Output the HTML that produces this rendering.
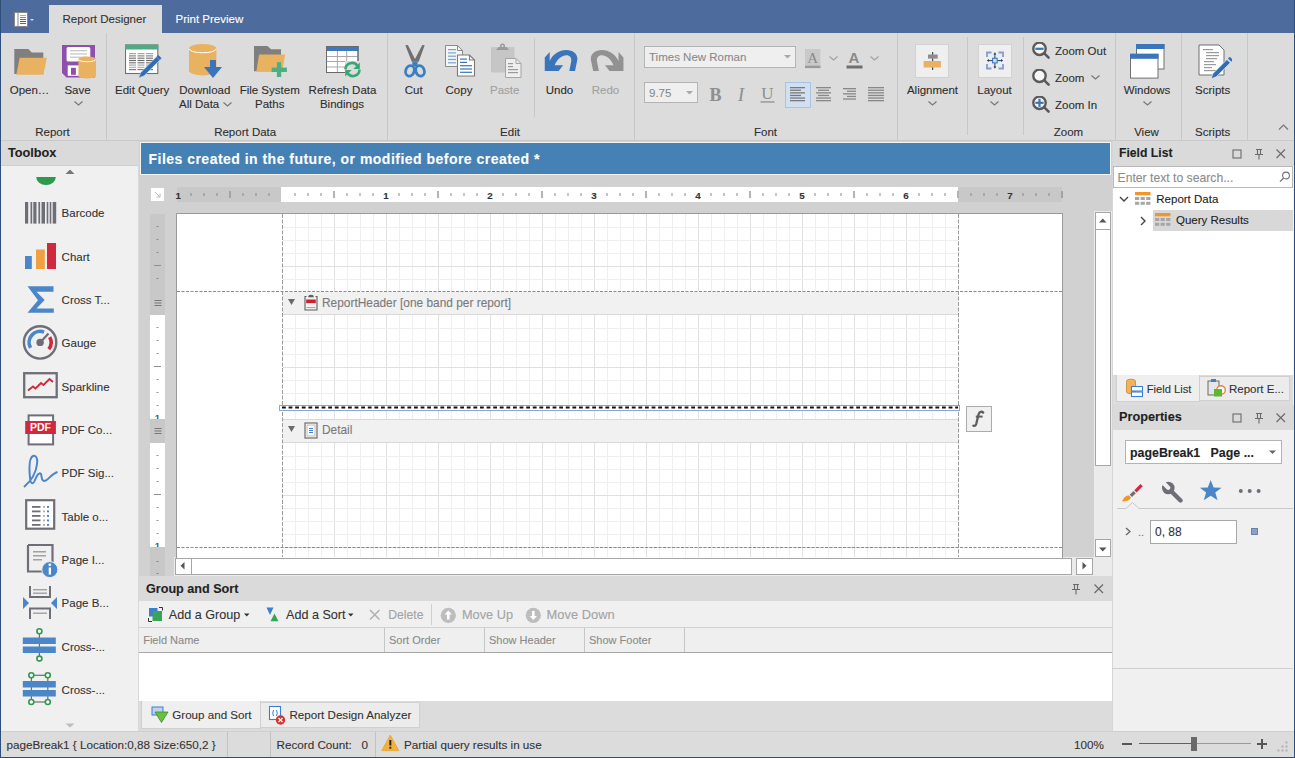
<!DOCTYPE html><html><head><meta charset="utf-8"><style>
*{margin:0;padding:0;box-sizing:border-box}
html,body{width:1295px;height:758px;overflow:hidden;background:#4d6c9d}
body{position:relative;font-family:"Liberation Sans",sans-serif}
.a{position:absolute}
.t{position:absolute;white-space:pre;line-height:16px;-webkit-text-stroke:0.1px currentColor}
</style></head><body><div class="a" style="left:0px;top:0px;width:1295px;height:758px;background:#4d6c9d"></div><div class="a" style="left:0px;top:0px;width:1295px;height:33px;background:#4d6c9d"></div><div class="a" style="left:49px;top:5px;width:113px;height:28px;background:#dcdcdc"></div><div class="t" style="left:62.5px;top:11.02px;font-size:11.5px;color:#333;">Report Designer</div><div class="t" style="left:175.5px;top:11.02px;font-size:11.5px;color:#fff;">Print Preview</div><svg class="a" style="left:14px;top:12px;" width="24" height="16" viewBox="0 0 24 16"><rect x="0.5" y="0.5" width="13" height="14" fill="#fff" stroke="#888" stroke-width="1"/><rect x="3.5" y="0.5" width="1" height="14" fill="#888"/><rect x="6" y="3" width="6" height="1" fill="#aaa"/><rect x="6" y="5" width="6" height="1" fill="#888"/><rect x="6" y="7" width="6" height="1" fill="#666"/><rect x="6" y="9" width="6" height="1" fill="#555"/><rect x="6" y="11" width="6" height="1" fill="#666"/><path d="M16 7 h4 l-2 2z" fill="#ddd"/></svg><div class="a" style="left:1px;top:33px;width:1293px;height:107px;background:#dcdcdc"></div><div class="a" style="left:1px;top:140px;width:1293px;height:1px;background:#c9c9c9"></div><div class="a" style="left:106px;top:33px;width:1px;height:107px;background:#c8c8c8"></div><div class="a" style="left:387px;top:33px;width:1px;height:107px;background:#c8c8c8"></div><div class="a" style="left:634px;top:33px;width:1px;height:107px;background:#c8c8c8"></div><div class="a" style="left:897px;top:33px;width:1px;height:107px;background:#c8c8c8"></div><div class="a" style="left:1115px;top:33px;width:1px;height:107px;background:#c8c8c8"></div><div class="a" style="left:1181px;top:33px;width:1px;height:107px;background:#c8c8c8"></div><div class="a" style="left:1247px;top:33px;width:1px;height:107px;background:#c8c8c8"></div><div class="a" style="left:534px;top:38px;width:1px;height:79px;background:#c8c8c8"></div><div class="a" style="left:967px;top:37px;width:1px;height:98px;background:#c8c8c8"></div><div class="a" style="left:1023px;top:37px;width:1px;height:98px;background:#c8c8c8"></div><svg class="a" style="left:14px;top:44px;" width="34" height="34" viewBox="0 0 34 34"><path d="M0.3 5 h14 l3.5 3.5 h11.5 v21.5 h-29z" fill="#7f7f7f"/><path d="M5.7 13.7 h27.1 l-3.4 17 h-27.1z" fill="#e8b260"/></svg><div class="t" style="left:9.7px;top:82.02px;font-size:11.5px;color:#2e2e2e;">Open…</div><svg class="a" style="left:62px;top:45px;" width="35" height="35" viewBox="0 0 35 35"><path d="M0 0 h33 v32.5 h-28.5 l-4.5 -4.6z" fill="#8e50ab"/><rect x="4.6" y="2" width="23.7" height="14.5" rx="1.5" fill="#fff"/><rect x="8" y="5" width="17" height="1.3" fill="#c8c8c8"/><rect x="8" y="8.3" width="17" height="1.3" fill="#c8c8c8"/><rect x="8" y="11.6" width="17" height="1.3" fill="#c8c8c8"/><rect x="5.7" y="20.4" width="20" height="10.4" fill="#fff"/><rect x="9" y="22.8" width="4.9" height="7" fill="#8e50ab"/><path d="M16.4 14 a8.8 2.4 0 0 1 17.6 0 v17 a8.8 2.6 0 0 1 -17.6 0z" fill="#e8b260"/><path d="M16.4 14.3 a8.8 2.4 0 0 0 17.6 0" fill="none" stroke="#fff" stroke-width="0.9"/></svg><div class="t" style="left:-72.5px;width:300px;text-align:center;top:82.02px;font-size:11.5px;color:#2e2e2e;">Save</div><svg class="a" style="left:74px;top:101px;" width="9" height="5" viewBox="0 0 9 5"><path d="M0.5 0.5 L4.5 4 L8.5 0.5" fill="none" stroke="#777" stroke-width="1.2"/></svg><div class="t" style="left:-97.5px;width:300px;text-align:center;top:124.02px;font-size:11.5px;color:#2e2e2e;">Report</div><svg class="a" style="left:125px;top:44px;" width="37" height="36" viewBox="0 0 37 36"><rect x="0.5" y="1" width="32.3" height="28.5" fill="#fff" stroke="#707070" stroke-width="1.1"/><rect x="0" y="0.5" width="33.3" height="5" fill="#52a985"/><rect x="4" y="9" width="7" height="1.2" fill="#6a6a6a" opacity="0.6"/><rect x="4" y="11.3" width="7" height="1.2" fill="#6a6a6a" opacity="0.8"/><rect x="4" y="13.6" width="7" height="1.2" fill="#6a6a6a" opacity="0.9"/><rect x="4" y="15.9" width="7" height="1.2" fill="#6a6a6a" opacity="1"/><rect x="4" y="18.2" width="7" height="1.2" fill="#6a6a6a" opacity="0.9"/><rect x="4" y="20.5" width="7" height="1.2" fill="#6a6a6a" opacity="0.6"/><rect x="4" y="22.8" width="7" height="1.2" fill="#6a6a6a" opacity="0.5"/><rect x="4" y="25" width="7" height="1.2" fill="#6a6a6a" opacity="0.9"/><rect x="12.5" y="9" width="7" height="1.2" fill="#6a6a6a" opacity="0.6"/><rect x="12.5" y="11.3" width="7" height="1.2" fill="#6a6a6a" opacity="0.8"/><rect x="12.5" y="13.6" width="7" height="1.2" fill="#6a6a6a" opacity="0.9"/><rect x="12.5" y="15.9" width="7" height="1.2" fill="#6a6a6a" opacity="1"/><rect x="12.5" y="18.2" width="7" height="1.2" fill="#6a6a6a" opacity="0.9"/><rect x="12.5" y="20.5" width="7" height="1.2" fill="#6a6a6a" opacity="0.6"/><rect x="12.5" y="22.8" width="7" height="1.2" fill="#6a6a6a" opacity="0.5"/><rect x="12.5" y="25" width="7" height="1.2" fill="#6a6a6a" opacity="0.9"/><rect x="21" y="9" width="7" height="1.2" fill="#6a6a6a" opacity="0.6"/><rect x="21" y="11.3" width="7" height="1.2" fill="#6a6a6a" opacity="0.8"/><rect x="21" y="13.6" width="7" height="1.2" fill="#6a6a6a" opacity="0.9"/><rect x="21" y="15.9" width="7" height="1.2" fill="#6a6a6a" opacity="1"/><rect x="21" y="18.2" width="7" height="1.2" fill="#6a6a6a" opacity="0.9"/><rect x="21" y="20.5" width="7" height="1.2" fill="#6a6a6a" opacity="0.6"/><rect x="21" y="22.8" width="7" height="1.2" fill="#6a6a6a" opacity="0.5"/><rect x="21" y="25" width="7" height="1.2" fill="#6a6a6a" opacity="0.9"/><path d="M13.5 34 l2.3 -5.5 l15.7 -15.7 l3.3 3.3 l-15.7 15.7z" fill="#2f6db5" stroke="#dcdcdc" stroke-width="0.6"/><path d="M31.5 12.8 l1.8 -1.8 l3.3 3.3 l-1.8 1.8z" fill="#2f6db5"/></svg><div class="t" style="left:-7.800000000000011px;width:300px;text-align:center;top:82.02px;font-size:11.5px;color:#2e2e2e;">Edit Query</div><svg class="a" style="left:188px;top:43px;" width="35" height="37" viewBox="0 0 35 37"><path d="M1 5.3 a13.7 4.3 0 0 1 27.4 0 v22.5 a13.7 4.6 0 0 1 -27.4 0z" fill="#e8b260"/><path d="M1.2 5.8 a13.5 4 0 0 0 27 0" fill="none" stroke="#fff" stroke-width="1"/><path d="M22 17 h6 v7 h6 l-9 11 l-9 -11 h6z" fill="#3a75bb"/></svg><div class="t" style="left:54.80000000000001px;width:300px;text-align:center;top:82.02px;font-size:11.5px;color:#2e2e2e;">Download</div><div class="t" style="left:179px;top:96.02px;font-size:11.5px;color:#2e2e2e;">All Data</div><svg class="a" style="left:223px;top:102px;" width="9" height="5" viewBox="0 0 9 5"><path d="M0.5 0.5 L4.5 4 L8.5 0.5" fill="none" stroke="#777" stroke-width="1.2"/></svg><svg class="a" style="left:254px;top:45px;" width="34" height="33" viewBox="0 0 34 33"><path d="M0 1 h13.5 l3.5 3.3 h10 v22 h-27z" fill="#7f7f7f"/><path d="M5.1 9.4 h26 l-2.8 17.3 h-26z" fill="#e8b260"/><rect x="22.9" y="17.2" width="4.3" height="14.8" fill="#4caf82"/><rect x="17.6" y="22.6" width="15.3" height="4.4" fill="#4caf82"/></svg><div class="t" style="left:119.69999999999999px;width:300px;text-align:center;top:82.02px;font-size:11.5px;color:#2e2e2e;">File System</div><div class="t" style="left:119.69999999999999px;width:300px;text-align:center;top:96.02px;font-size:11.5px;color:#2e2e2e;">Paths</div><svg class="a" style="left:325px;top:45px;" width="36" height="34" viewBox="0 0 36 34"><rect x="1.5" y="1.5" width="31.5" height="26" fill="#fff" stroke="#6a6a6a" stroke-width="1"/><rect x="1" y="1" width="32.5" height="5" fill="#3d78c0"/><path d="M12.4 6 v21.5 M21.7 6 v21.5 M1.5 11.5 h31.5 M1.5 16.5 h31.5 M1.5 22 h31.5" stroke="#a8a8a8" stroke-width="1"/><rect x="1.5" y="1.5" width="31.5" height="26" fill="none" stroke="#6a6a6a" stroke-width="1"/><rect x="20" y="16" width="15" height="17" fill="#dcdcdc"/><path d="M20.5 24.5 a6.5 6.5 0 0 1 12 -3.5" fill="none" stroke="#3aa676" stroke-width="2.6"/><path d="M34.5 24.5 a6.5 6.5 0 0 1 -12 3.5" fill="none" stroke="#3aa676" stroke-width="2.6"/><path d="M34.8 17.5 v6.5 h-6.5z" fill="#3aa676"/><path d="M20.2 31.5 v-6.5 h6.5z" fill="#3aa676"/></svg><div class="t" style="left:192.5px;width:300px;text-align:center;top:82.02px;font-size:11.5px;color:#2e2e2e;">Refresh Data</div><div class="t" style="left:192px;width:300px;text-align:center;top:96.02px;font-size:11.5px;color:#2e2e2e;">Bindings</div><div class="t" style="left:95.19999999999999px;width:300px;text-align:center;top:124.02px;font-size:11.5px;color:#2e2e2e;">Report Data</div><svg class="a" style="left:400px;top:42px;" width="30" height="38" viewBox="0 0 30 38"><path d="M5.3 3.2 L7.9 2.9 L15 17 L22.3 2.9 L24.7 3.2 L18.7 19.7 L11.8 19.7z" fill="#707070"/><rect x="12.3" y="19.7" width="5.3" height="4.8" fill="#3c7fc1"/><ellipse cx="9.9" cy="28.9" rx="4.2" ry="5.4" fill="none" stroke="#3c7fc1" stroke-width="2.8" transform="rotate(18 9.9 28.9)"/><ellipse cx="20.1" cy="28.9" rx="4.2" ry="5.4" fill="none" stroke="#3c7fc1" stroke-width="2.8" transform="rotate(-18 20.1 28.9)"/></svg><div class="t" style="left:263.7px;width:300px;text-align:center;top:82.02px;font-size:11.5px;color:#2e2e2e;">Cut</div><svg class="a" style="left:444px;top:44px;" width="33" height="34" viewBox="0 0 33 34"><path d="M1.5 1.5 h12 l5 5 v16 h-17z" fill="#f5f5f5" stroke="#8a8a8a" stroke-width="1"/><path d="M13.5 1.5 v5 h5" fill="none" stroke="#8a8a8a" stroke-width="1"/><rect x="4" y="5" width="8" height="1.2" fill="#5b8fc9" opacity="0.8"/><rect x="4" y="8.3" width="8" height="1.2" fill="#5b8fc9" opacity="0.8"/><rect x="4" y="11.6" width="8" height="1.2" fill="#5b8fc9" opacity="0.8"/><rect x="4" y="14.9" width="8" height="1.2" fill="#5b8fc9" opacity="0.8"/><rect x="4" y="18.2" width="8" height="1.2" fill="#5b8fc9" opacity="0.8"/><path d="M13.5 11 h12 l5 5 v16 h-17z" fill="#fff" stroke="#7a7a7a" stroke-width="1.1"/><path d="M25.5 11 v5 h5" fill="none" stroke="#7a7a7a" stroke-width="1.1"/><rect x="16" y="14.5" width="7" height="1.2" fill="#3c73b8"/><rect x="16" y="17.8" width="7" height="1.2" fill="#3c73b8"/><rect x="16" y="21.1" width="12" height="1.2" fill="#3c73b8"/><rect x="16" y="24.4" width="12" height="1.2" fill="#3c73b8"/><rect x="16" y="27.7" width="12" height="1.2" fill="#3c73b8"/></svg><div class="t" style="left:309px;width:300px;text-align:center;top:82.02px;font-size:11.5px;color:#2e2e2e;">Copy</div><svg class="a" style="left:490px;top:43px;" width="32" height="35" viewBox="0 0 32 35"><rect x="1" y="4" width="23.5" height="25.5" rx="1" fill="#c6c6c6"/><path d="M6 7 h13 l-2.5 -3 h-8z" fill="#9a9a9a"/><circle cx="12.5" cy="3" r="1.8" fill="none" stroke="#9a9a9a" stroke-width="1.5"/><path d="M15.5 15.5 h10.5 l5 5 v14 h-15.5z" fill="#eeeeee" stroke="#a5a5a5" stroke-width="1"/><path d="M26 15.5 v5 h5" fill="none" stroke="#a5a5a5" stroke-width="1"/><rect x="18" y="20" width="5" height="1.2" fill="#9a9a9a"/><rect x="18" y="23" width="5" height="1.2" fill="#9a9a9a"/><rect x="18" y="26" width="10" height="1.2" fill="#9a9a9a"/><rect x="18" y="29" width="10" height="1.2" fill="#9a9a9a"/></svg><div class="t" style="left:354.7px;width:300px;text-align:center;top:82.02px;font-size:11.5px;color:#a0a0a0;">Paste</div><svg class="a" style="left:538px;top:40px;" width="48" height="36" viewBox="0 0 48 36"><path d="M6.75 30.9 L6.75 17.4 L11.7 12.1 L11.7 21 C15 14 21 10 28.4 10 C35 10 39.8 14 39.4 19.5 L37 30.9 L31.3 30.9 L33.3 21 C33.5 17.5 31.5 15.3 28.8 15.3 C23.5 15.3 19 19.5 16.7 25.2 L25.2 25.2 L20.6 30.9 Z" fill="#3a75bb"/></svg><div class="t" style="left:409.5px;width:300px;text-align:center;top:82.02px;font-size:11.5px;color:#2a2a2a;">Undo</div><svg class="a" style="left:584px;top:40px;" width="48" height="36" viewBox="0 0 48 36"><path d="M6.75 30.9 L6.75 17.4 L11.7 12.1 L11.7 21 C15 14 21 10 28.4 10 C35 10 39.8 14 39.4 19.5 L37 30.9 L31.3 30.9 L33.3 21 C33.5 17.5 31.5 15.3 28.8 15.3 C23.5 15.3 19 19.5 16.7 25.2 L25.2 25.2 L20.6 30.9 Z" fill="#919191" transform="translate(46.2,0) scale(-1,1)"/></svg><div class="t" style="left:455.5px;width:300px;text-align:center;top:82.02px;font-size:11.5px;color:#a0a0a0;">Redo</div><div class="t" style="left:360px;width:300px;text-align:center;top:124.02px;font-size:11.5px;color:#2e2e2e;">Edit</div><div class="a" style="left:644px;top:46px;width:152px;height:22px;background:#efefef;border:1px solid #b4b4b4"></div><div class="t" style="left:649px;top:49.02px;font-size:11.5px;color:#8a8a8a;">Times New Roman</div><svg class="a" style="left:784px;top:55px;" width="8" height="4" viewBox="0 0 8 4"><path d="M0 0 h7 l-3.5 3.5z" fill="#a8a8a8"/></svg><div class="a" style="left:644px;top:82px;width:54px;height:21px;background:#efefef;border:1px solid #b4b4b4"></div><div class="t" style="left:649px;top:84.52px;font-size:11.5px;color:#8a8a8a;">9.75</div><svg class="a" style="left:686px;top:91px;" width="8" height="4" viewBox="0 0 8 4"><path d="M0 0 h7 l-3.5 3.5z" fill="#a8a8a8"/></svg><svg class="a" style="left:805px;top:49px;" width="17" height="20" viewBox="0 0 17 20"><rect x="0" y="0" width="15.5" height="16" fill="#c9c9c9"/><text x="7.75" y="14" font-family="Liberation Serif" font-size="15" fill="#8a8a8a" text-anchor="middle">A</text><rect x="0" y="16.5" width="15.5" height="2.6" fill="#9a9a9a"/></svg><svg class="a" style="left:829px;top:56px;" width="9" height="5" viewBox="0 0 9 5"><path d="M0.5 0.5 L4.5 4 L8.5 0.5" fill="none" stroke="#a0a0a0" stroke-width="1.1"/></svg><svg class="a" style="left:846px;top:49px;" width="17" height="20" viewBox="0 0 17 20"><text x="8" y="14" font-family="Liberation Sans" font-weight="bold" font-size="15" fill="#8a8a8a" text-anchor="middle">A</text><rect x="0.5" y="16.5" width="16" height="3" fill="#6f6f6f"/></svg><svg class="a" style="left:870px;top:56px;" width="9" height="5" viewBox="0 0 9 5"><path d="M0.5 0.5 L4.5 4 L8.5 0.5" fill="none" stroke="#a0a0a0" stroke-width="1.1"/></svg><div class="t" style="left:565.5px;width:300px;text-align:center;top:86.76px;font-size:18px;color:#8f8f8f;font-weight:bold;font-family:'Liberation Serif',serif">B</div><div class="t" style="left:591px;width:300px;text-align:center;top:86.76px;font-size:18px;color:#8f8f8f;font-family:'Liberation Serif',serif;font-style:italic">I</div><svg class="a" style="left:760px;top:85px;" width="16" height="20" viewBox="0 0 16 20"><text x="7.5" y="14" font-family="Liberation Serif" font-size="17" fill="#8f8f8f" text-anchor="middle">U</text><rect x="0.5" y="16.3" width="14" height="1.3" fill="#8f8f8f"/></svg><div class="a" style="left:785px;top:82px;width:26px;height:26px;background:#cfe0f3;border:1px solid #a9c3e3"></div><svg class="a" style="left:790px;top:87px;" width="17" height="17" viewBox="0 0 17 17"><rect x="0" y="0.0" width="15" height="1.3" fill="#7a7a7a"/><rect x="0" y="2.6" width="11" height="1.3" fill="#7a7a7a"/><rect x="0" y="5.2" width="15" height="1.3" fill="#7a7a7a"/><rect x="0" y="7.8" width="11" height="1.3" fill="#7a7a7a"/><rect x="0" y="10.4" width="15" height="1.3" fill="#7a7a7a"/><rect x="0" y="13.0" width="15" height="1.3" fill="#7a7a7a"/></svg><svg class="a" style="left:816px;top:87px;" width="17" height="17" viewBox="0 0 17 17"><rect x="0" y="0.0" width="15" height="1.3" fill="#888"/><rect x="2" y="2.6" width="11" height="1.3" fill="#888"/><rect x="0" y="5.2" width="15" height="1.3" fill="#888"/><rect x="2" y="7.8" width="11" height="1.3" fill="#888"/><rect x="0" y="10.4" width="15" height="1.3" fill="#888"/><rect x="0" y="13.0" width="15" height="1.3" fill="#888"/></svg><svg class="a" style="left:843px;top:88px;" width="17" height="17" viewBox="0 0 17 17"><rect x="0" y="0.0" width="13" height="1.3" fill="#888"/><rect x="4" y="2.6" width="9" height="1.3" fill="#888"/><rect x="0" y="5.2" width="13" height="1.3" fill="#888"/><rect x="4" y="7.8" width="9" height="1.3" fill="#888"/><rect x="0" y="10.4" width="13" height="1.3" fill="#888"/></svg><svg class="a" style="left:868px;top:87px;" width="17" height="17" viewBox="0 0 17 17"><rect x="0" y="0.0" width="16" height="1.3" fill="#888"/><rect x="0" y="2.6" width="16" height="1.3" fill="#888"/><rect x="0" y="5.2" width="16" height="1.3" fill="#888"/><rect x="0" y="7.8" width="16" height="1.3" fill="#888"/><rect x="0" y="10.4" width="16" height="1.3" fill="#888"/><rect x="0" y="13.0" width="16" height="1.3" fill="#888"/></svg><div class="t" style="left:615.5px;width:300px;text-align:center;top:124.02px;font-size:11.5px;color:#2e2e2e;">Font</div><div class="a" style="left:915px;top:44px;width:34px;height:34px;background:#efefef;border:1px solid #d2d2d2"></div><svg class="a" style="left:915px;top:44px;" width="34" height="34" viewBox="0 0 34 34"><rect x="17.1" y="8" width="1.1" height="18" fill="#3a3a3a"/><rect x="13" y="10.5" width="9.7" height="4.1" fill="#8d8d8d"/><rect x="8.6" y="17" width="17.3" height="6.5" fill="#e8b260"/></svg><div class="t" style="left:782.5px;width:300px;text-align:center;top:82.02px;font-size:11.5px;color:#2e2e2e;">Alignment</div><svg class="a" style="left:928px;top:101px;" width="9" height="5" viewBox="0 0 9 5"><path d="M0.5 0.5 L4.5 4 L8.5 0.5" fill="none" stroke="#777" stroke-width="1.2"/></svg><div class="a" style="left:978px;top:44px;width:34px;height:34px;background:#efefef;border:1px solid #d2d2d2"></div><svg class="a" style="left:978px;top:44px;" width="34" height="34" viewBox="0 0 34 34"><rect x="9" y="8.5" width="16" height="16" fill="#e8eef8"/><path d="M9 13 V8.5 H13.5 M20.5 8.5 H25 V13 M25 20 V24.5 H20.5 M13.5 24.5 H9 V20" fill="none" stroke="#8a9bc8" stroke-width="1.8"/><rect x="14.6" y="14.3" width="4.6" height="4.6" fill="#bfe0f8" stroke="#3c7fc1" stroke-width="1.1"/><path d="M16.9 14 V10 M16.9 19.2 V23 M14.3 16.6 H10.5 M19.5 16.6 H23.5" stroke="#2c3e5c" stroke-width="1"/><path d="M15.4 10.5 L16.9 8.3 L18.4 10.5z M15.4 22.5 L16.9 24.7 L18.4 22.5z M11 15.1 L8.8 16.6 L11 18.1z M23 15.1 L25.2 16.6 L23 18.1z" fill="#2c3e5c"/></svg><div class="t" style="left:844.5px;width:300px;text-align:center;top:82.02px;font-size:11.5px;color:#2e2e2e;">Layout</div><svg class="a" style="left:990px;top:101px;" width="9" height="5" viewBox="0 0 9 5"><path d="M0.5 0.5 L4.5 4 L8.5 0.5" fill="none" stroke="#777" stroke-width="1.2"/></svg><svg class="a" style="left:1032px;top:42px;" width="20" height="19" viewBox="0 0 20 19"><circle cx="7.5" cy="6.8" r="6.2" fill="#f6f6f6" stroke="#5a5a5a" stroke-width="2.4"/><path d="M12.3 11.4 L16.6 15.7" stroke="#5a5a5a" stroke-width="2.6" stroke-linecap="round"/><rect x="3.4" y="5.7" width="8.2" height="2.2" fill="#3a75bb"/></svg><div class="t" style="left:1055px;top:42.52px;font-size:11.5px;color:#2e2e2e;">Zoom Out</div><svg class="a" style="left:1032px;top:69px;" width="20" height="19" viewBox="0 0 20 19"><circle cx="7.5" cy="6.8" r="6.2" fill="#f6f6f6" stroke="#5a5a5a" stroke-width="2.4"/><path d="M12.3 11.4 L16.6 15.7" stroke="#5a5a5a" stroke-width="2.6" stroke-linecap="round"/></svg><div class="t" style="left:1055px;top:69.52px;font-size:11.5px;color:#2e2e2e;">Zoom</div><svg class="a" style="left:1091px;top:75px;" width="9" height="5" viewBox="0 0 9 5"><path d="M0.5 0.5 L4.5 4 L8.5 0.5" fill="none" stroke="#777" stroke-width="1.2"/></svg><svg class="a" style="left:1032px;top:96px;" width="20" height="19" viewBox="0 0 20 19"><circle cx="7.5" cy="6.8" r="6.2" fill="#f6f6f6" stroke="#5a5a5a" stroke-width="2.4"/><path d="M12.3 11.4 L16.6 15.7" stroke="#5a5a5a" stroke-width="2.6" stroke-linecap="round"/><rect x="3.4" y="5.7" width="8.2" height="2.2" fill="#3a75bb"/><rect x="6.4" y="2.7" width="2.2" height="8.2" fill="#3a75bb"/></svg><div class="t" style="left:1055px;top:96.52px;font-size:11.5px;color:#2e2e2e;">Zoom In</div><div class="t" style="left:918.5px;width:300px;text-align:center;top:124.02px;font-size:11.5px;color:#2e2e2e;">Zoom</div><svg class="a" style="left:1129px;top:43px;" width="37" height="38" viewBox="0 0 37 38"><rect x="7.5" y="1.5" width="27.5" height="24.5" fill="#fff" stroke="#707070" stroke-width="1"/><rect x="7" y="1" width="28.5" height="5" fill="#3a75bb"/><rect x="1.5" y="11.3" width="27.5" height="23.8" fill="#fff" stroke="#707070" stroke-width="1"/><rect x="1" y="10.8" width="28.5" height="5" fill="#3a75bb"/></svg><div class="t" style="left:997px;width:300px;text-align:center;top:82.02px;font-size:11.5px;color:#2e2e2e;">Windows</div><svg class="a" style="left:1143px;top:101px;" width="9" height="5" viewBox="0 0 9 5"><path d="M0.5 0.5 L4.5 4 L8.5 0.5" fill="none" stroke="#777" stroke-width="1.2"/></svg><div class="t" style="left:996.5px;width:300px;text-align:center;top:124.02px;font-size:11.5px;color:#2e2e2e;">View</div><svg class="a" style="left:1198px;top:43px;" width="34" height="37" viewBox="0 0 34 37"><path d="M1 2 h20 l5 5 v25 h-25z" fill="#fff" stroke="#707070" stroke-width="1"/><rect x="5" y="6" width="10" height="1.2" fill="#9a9a9a"/><rect x="8" y="9" width="13" height="1.2" fill="#9a9a9a"/><rect x="8" y="12" width="13" height="1.2" fill="#9a9a9a"/><rect x="8" y="15" width="11" height="1.2" fill="#9a9a9a"/><rect x="6" y="18" width="10" height="1.2" fill="#9a9a9a"/><rect x="6" y="21" width="12" height="1.2" fill="#9a9a9a"/><rect x="6" y="24" width="8" height="1.2" fill="#9a9a9a"/><rect x="6" y="27" width="12" height="1.2" fill="#9a9a9a"/><path d="M13 36 l2 -5.5 l14 -14 l3.3 3.3 l-14 14z" fill="#2f6db5" stroke="#fff" stroke-width="0.6"/><path d="M30 15.5 l1.8 -1.8 l3.3 3.3 l-1.8 1.8z" fill="#2f6db5"/></svg><div class="t" style="left:1062.7px;width:300px;text-align:center;top:82.02px;font-size:11.5px;color:#2e2e2e;">Scripts</div><div class="t" style="left:1062.7px;width:300px;text-align:center;top:124.02px;font-size:11.5px;color:#2e2e2e;">Scripts</div><svg class="a" style="left:1278px;top:123px;" width="12" height="8" viewBox="0 0 12 8"><path d="M1 6.5 L5.5 2 L10 6.5" fill="none" stroke="#777" stroke-width="1.2"/></svg><div class="a" style="left:138px;top:141px;width:974px;height:436px;background:#d1d1d1"></div><div class="a" style="left:1px;top:141px;width:137px;height:590px;background:#f0f0f0"></div><div class="a" style="left:1px;top:141px;width:137px;height:24px;background:#dadada"></div><div class="a" style="left:1px;top:165px;width:137px;height:1px;background:#cfcfcf"></div><div class="t" style="left:8px;top:145.10px;font-size:12.7px;color:#222;font-weight:bold;">Toolbox</div><svg class="a" style="left:64px;top:168px;" width="12" height="8" viewBox="0 0 12 8"><path d="M1.5 6 L6 1.5 L10.5 6z" fill="#777"/></svg><svg class="a" style="left:35px;top:175px;" width="22" height="11" viewBox="0 0 22 11"><path d="M1.2 2 h19.6 a9.8 8 0 0 1 -19.6 0z" fill="#2e9a4c"/></svg><div class="t" style="left:61.6px;top:205.22px;font-size:11.5px;color:#333;">Barcode</div><div class="t" style="left:61.6px;top:248.57px;font-size:11.5px;color:#333;">Chart</div><div class="t" style="left:61.6px;top:291.92px;font-size:11.5px;color:#333;">Cross T...</div><div class="t" style="left:61.6px;top:335.27px;font-size:11.5px;color:#333;">Gauge</div><div class="t" style="left:61.6px;top:378.62px;font-size:11.5px;color:#333;">Sparkline</div><div class="t" style="left:61.6px;top:421.97px;font-size:11.5px;color:#333;">PDF Co...</div><div class="t" style="left:61.6px;top:465.32px;font-size:11.5px;color:#333;">PDF Sig...</div><div class="t" style="left:61.6px;top:508.67px;font-size:11.5px;color:#333;">Table o...</div><div class="t" style="left:61.6px;top:552.02px;font-size:11.5px;color:#333;">Page I...</div><div class="t" style="left:61.6px;top:595.37px;font-size:11.5px;color:#333;">Page B...</div><div class="t" style="left:61.6px;top:638.72px;font-size:11.5px;color:#333;">Cross-...</div><div class="t" style="left:61.6px;top:682.07px;font-size:11.5px;color:#333;">Cross-...</div><svg class="a" style="left:25px;top:202px;" width="32" height="22" viewBox="0 0 32 22"><rect x="0" y="0" width="3.2" height="21.6" fill="#6e6e78"/><rect x="5.5" y="0" width="1.7" height="21.6" fill="#6e6e78"/><rect x="8.3" y="0" width="3.2" height="21.6" fill="#6e6e78"/><rect x="13.4" y="0" width="1.7" height="21.6" fill="#6e6e78"/><rect x="16.5" y="0" width="3.5" height="21.6" fill="#6e6e78"/><rect x="21.7" y="0" width="1.6" height="21.6" fill="#6e6e78"/><rect x="24.7" y="0" width="1.6" height="21.6" fill="#6e6e78"/><rect x="27.7" y="0" width="3.5" height="21.6" fill="#6e6e78"/></svg><svg class="a" style="left:25px;top:243px;" width="32" height="27" viewBox="0 0 32 27"><rect x="0" y="13" width="6.8" height="13" fill="#4a86c8"/><rect x="11" y="6.5" width="8.8" height="19.5" fill="#f0a040"/><rect x="22" y="0" width="9" height="26" fill="#d0283c"/></svg><svg class="a" style="left:27px;top:286px;" width="28" height="28" viewBox="0 0 28 28"><path d="M0.5 0.3 h26 v5.5 h-17 l8.2 8.3 l-8.2 8.4 h17.3 v4.2 h-26.3 l10.5 -12.4z" fill="#4a86c8"/></svg><svg class="a" style="left:22px;top:324px;" width="37" height="37" viewBox="0 0 37 37"><circle cx="18.1" cy="18.4" r="16.2" fill="none" stroke="#6e6e78" stroke-width="2.4"/><path d="M8.57 23.9 A11 11 0 0 1 22.04 8.13" fill="none" stroke="#4a86c8" stroke-width="3.6"/><path d="M27.72 13.07 A11 11 0 0 1 26.81 25.11" fill="none" stroke="#d0283c" stroke-width="3.6"/><circle cx="18.1" cy="18.4" r="3.7" fill="#6e6e78"/><path d="M18.1 18.4 L26.5 9.5" stroke="#6e6e78" stroke-width="2.2"/></svg><svg class="a" style="left:23px;top:372px;" width="36" height="27" viewBox="0 0 36 27"><rect x="1.2" y="1.2" width="32.5" height="24" fill="none" stroke="#6e6e78" stroke-width="2.3"/><path d="M5 18.5 L10 14.5 L12.5 16.5 L18 11 L20.5 13 L26.5 7 L30 10" fill="none" stroke="#d0283c" stroke-width="1.8"/></svg><svg class="a" style="left:25px;top:414px;" width="32" height="32" viewBox="0 0 32 32"><rect x="3.6" y="1.4" width="24.5" height="29" fill="#fff" stroke="#6e6e78" stroke-width="2"/><rect x="0.2" y="7" width="30.7" height="13" fill="#d0283c"/><text x="15.5" y="17.3" font-family="Liberation Sans" font-weight="bold" font-size="10.5" fill="#fff" text-anchor="middle">PDF</text></svg><svg class="a" style="left:23px;top:454px;" width="36" height="35" viewBox="0 0 36 35"><path d="M1 33 C8 27 13 20 14 10 C15 3 12 1 10 2 C6 4 6 14 7 24 C7.5 30 10 31 12 26 C14 21 16 18 18 20 C19 22 18 27 21 27 C25 27 28 20 34.5 18" fill="none" stroke="#4a86c8" stroke-width="2"/></svg><svg class="a" style="left:25px;top:499px;" width="31" height="31" viewBox="0 0 31 31"><rect x="1.2" y="1.2" width="28" height="28.5" fill="#fff" stroke="#6e6e78" stroke-width="2.2"/><rect x="7" y="7" width="8.5" height="1.8" fill="#6e6e78"/><rect x="18" y="7" width="2" height="1.8" fill="#b0b0b0"/><rect x="22" y="7" width="2" height="1.8" fill="#3a7fd0"/><rect x="7" y="11.5" width="8.5" height="1.8" fill="#6e6e78"/><rect x="18" y="11.5" width="2" height="1.8" fill="#b0b0b0"/><rect x="22" y="11.5" width="2" height="1.8" fill="#3a7fd0"/><rect x="7" y="16" width="8.5" height="1.8" fill="#6e6e78"/><rect x="18" y="16" width="2" height="1.8" fill="#b0b0b0"/><rect x="22" y="16" width="2" height="1.8" fill="#3a7fd0"/><rect x="7" y="20.5" width="8.5" height="1.8" fill="#6e6e78"/><rect x="18" y="20.5" width="2" height="1.8" fill="#b0b0b0"/><rect x="22" y="20.5" width="2" height="1.8" fill="#3a7fd0"/><rect x="7" y="25" width="8.5" height="1.8" fill="#6e6e78"/><rect x="18" y="25" width="2" height="1.8" fill="#b0b0b0"/><rect x="22" y="25" width="2" height="1.8" fill="#3a7fd0"/></svg><svg class="a" style="left:26px;top:543px;" width="34" height="36" viewBox="0 0 34 36"><path d="M2 2 h24.5 v19 M2 2 v26.5 h15" fill="none" stroke="#6e6e78" stroke-width="2.2"/><rect x="7" y="8" width="13" height="1.5" fill="#a0a0a8"/><rect x="7" y="12" width="13" height="1.5" fill="#a0a0a8"/><rect x="7" y="16" width="9" height="1.5" fill="#a0a0a8"/><circle cx="23.8" cy="26.6" r="8" fill="#4a86c8" stroke="#f0f0f0" stroke-width="1"/><rect x="22.7" y="24.5" width="2.3" height="7" fill="#fff"/><circle cx="23.8" cy="21.8" r="1.4" fill="#fff"/></svg><svg class="a" style="left:22px;top:585px;" width="36" height="35" viewBox="0 0 36 35"><path d="M8 1 v11 h20 v-11" fill="none" stroke="#6e6e78" stroke-width="2"/><rect x="11" y="4" width="14" height="1.4" fill="#a0a0a8"/><rect x="11" y="7.5" width="14" height="1.4" fill="#a0a0a8"/><path d="M8 34 v-10.5 h20 v10.5" fill="none" stroke="#6e6e78" stroke-width="2"/><rect x="11" y="27.5" width="14" height="1.4" fill="#a0a0a8"/><path d="M1 12 L7 18 L1 24z M35 12 L29 18 L35 24z" fill="#4a86c8"/></svg><svg class="a" style="left:22px;top:627px;" width="35" height="36" viewBox="0 0 35 36"><rect x="16.8" y="4" width="1.2" height="28" fill="#6e6e78"/><rect x="0.8" y="10.5" width="33" height="6.5" fill="#4a86c8"/><rect x="0.8" y="19.5" width="33" height="6.5" fill="#4a86c8"/><circle cx="17.4" cy="4.3" r="2.5" fill="#fff" stroke="#2e9a4c" stroke-width="1.6"/><circle cx="17.4" cy="31.6" r="2.5" fill="#fff" stroke="#2e9a4c" stroke-width="1.6"/></svg><svg class="a" style="left:22px;top:671px;" width="35" height="36" viewBox="0 0 35 36"><rect x="8.8" y="4" width="1.2" height="27" fill="#6e6e78"/><rect x="25.2" y="4" width="1.2" height="27" fill="#6e6e78"/><rect x="9" y="3.7" width="16.5" height="1.2" fill="#6e6e78"/><rect x="9" y="30.4" width="16.5" height="1.2" fill="#6e6e78"/><rect x="0.8" y="10" width="33" height="6.5" fill="#4a86c8"/><rect x="0.8" y="19" width="33" height="6.5" fill="#4a86c8"/><circle cx="9.3" cy="4.3" r="2.5" fill="#fff" stroke="#2e9a4c" stroke-width="1.6"/><circle cx="25.8" cy="4.3" r="2.5" fill="#fff" stroke="#2e9a4c" stroke-width="1.6"/><circle cx="9.3" cy="31" r="2.5" fill="#fff" stroke="#2e9a4c" stroke-width="1.6"/><circle cx="25.8" cy="31" r="2.5" fill="#fff" stroke="#2e9a4c" stroke-width="1.6"/></svg><svg class="a" style="left:64px;top:722px;" width="12" height="7" viewBox="0 0 12 7"><path d="M1.5 1.5 L6 5.5 L10.5 1.5z" fill="#bdbdbd"/></svg><div class="a" style="left:138px;top:141px;width:1px;height:590px;background:#d9d9d9"></div><div class="a" style="left:140px;top:142px;width:971px;height:33px;background:#f4f4f4"></div><div class="a" style="left:141px;top:143px;width:969px;height:31px;background:#4581b4"></div><div class="t" style="left:148.5px;top:151.15px;font-size:14px;color:#fff;font-weight:bold;letter-spacing:0.48px;">Files created in the future, or modified before created *</div><div class="a" style="left:1094px;top:211px;width:18px;height:346px;background:#ebebeb"></div><div class="a" style="left:174px;top:557px;width:938px;height:19px;background:#ebebeb"></div><div class="a" style="left:151px;top:188px;width:13px;height:13px;background:#fff"></div><svg class="a" style="left:151px;top:188px;" width="13" height="13" viewBox="0 0 13 13"><path d="M4 4 L9 9 M9 5.5 V9 H5.5" fill="none" stroke="#b8b8b8" stroke-width="1"/></svg><div class="a" style="left:177px;top:187px;width:104px;height:15px;background:#c8c8c8"></div><div class="a" style="left:281px;top:187px;width:677px;height:15px;background:#fff"></div><div class="a" style="left:958px;top:187px;width:104px;height:15px;background:#c8c8c8"></div><svg class="a" style="left:177px;top:187px;" width="886" height="15" viewBox="0 0 886 15"><rect x="13" y="6" width="2" height="3" fill="#a8a8a8"/><rect x="26" y="6" width="2" height="3" fill="#a8a8a8"/><rect x="39" y="6" width="2" height="3" fill="#a8a8a8"/><rect x="52" y="4" width="2" height="7" fill="#a2a2a2"/><rect x="65" y="6" width="2" height="3" fill="#a8a8a8"/><rect x="78" y="6" width="2" height="3" fill="#a8a8a8"/><rect x="91" y="6" width="2" height="3" fill="#a8a8a8"/><rect x="117" y="6" width="2" height="3" fill="#c4c4c4"/><rect x="130" y="6" width="2" height="3" fill="#c4c4c4"/><rect x="143" y="6" width="2" height="3" fill="#c4c4c4"/><rect x="156" y="4" width="2" height="7" fill="#b4b4b4"/><rect x="169" y="6" width="2" height="3" fill="#c4c4c4"/><rect x="182" y="6" width="2" height="3" fill="#c4c4c4"/><rect x="195" y="6" width="2" height="3" fill="#c4c4c4"/><rect x="221" y="6" width="2" height="3" fill="#c4c4c4"/><rect x="234" y="6" width="2" height="3" fill="#c4c4c4"/><rect x="247" y="6" width="2" height="3" fill="#c4c4c4"/><rect x="260" y="4" width="2" height="7" fill="#b4b4b4"/><rect x="273" y="6" width="2" height="3" fill="#c4c4c4"/><rect x="286" y="6" width="2" height="3" fill="#c4c4c4"/><rect x="299" y="6" width="2" height="3" fill="#c4c4c4"/><rect x="325" y="6" width="2" height="3" fill="#c4c4c4"/><rect x="338" y="6" width="2" height="3" fill="#c4c4c4"/><rect x="351" y="6" width="2" height="3" fill="#c4c4c4"/><rect x="364" y="4" width="2" height="7" fill="#b4b4b4"/><rect x="377" y="6" width="2" height="3" fill="#c4c4c4"/><rect x="390" y="6" width="2" height="3" fill="#c4c4c4"/><rect x="403" y="6" width="2" height="3" fill="#c4c4c4"/><rect x="429" y="6" width="2" height="3" fill="#c4c4c4"/><rect x="442" y="6" width="2" height="3" fill="#c4c4c4"/><rect x="455" y="6" width="2" height="3" fill="#c4c4c4"/><rect x="468" y="4" width="2" height="7" fill="#b4b4b4"/><rect x="481" y="6" width="2" height="3" fill="#c4c4c4"/><rect x="494" y="6" width="2" height="3" fill="#c4c4c4"/><rect x="507" y="6" width="2" height="3" fill="#c4c4c4"/><rect x="533" y="6" width="2" height="3" fill="#c4c4c4"/><rect x="546" y="6" width="2" height="3" fill="#c4c4c4"/><rect x="559" y="6" width="2" height="3" fill="#c4c4c4"/><rect x="572" y="4" width="2" height="7" fill="#b4b4b4"/><rect x="585" y="6" width="2" height="3" fill="#c4c4c4"/><rect x="598" y="6" width="2" height="3" fill="#c4c4c4"/><rect x="611" y="6" width="2" height="3" fill="#c4c4c4"/><rect x="637" y="6" width="2" height="3" fill="#c4c4c4"/><rect x="650" y="6" width="2" height="3" fill="#c4c4c4"/><rect x="663" y="6" width="2" height="3" fill="#c4c4c4"/><rect x="676" y="4" width="2" height="7" fill="#b4b4b4"/><rect x="689" y="6" width="2" height="3" fill="#c4c4c4"/><rect x="702" y="6" width="2" height="3" fill="#c4c4c4"/><rect x="715" y="6" width="2" height="3" fill="#c4c4c4"/><rect x="741" y="6" width="2" height="3" fill="#c4c4c4"/><rect x="754" y="6" width="2" height="3" fill="#c4c4c4"/><rect x="767" y="6" width="2" height="3" fill="#c4c4c4"/><rect x="780" y="4" width="2" height="7" fill="#b4b4b4"/><rect x="793" y="6" width="2" height="3" fill="#a8a8a8"/><rect x="806" y="6" width="2" height="3" fill="#a8a8a8"/><rect x="819" y="6" width="2" height="3" fill="#a8a8a8"/><rect x="845" y="6" width="2" height="3" fill="#a8a8a8"/><rect x="858" y="6" width="2" height="3" fill="#a8a8a8"/><rect x="871" y="6" width="2" height="3" fill="#a8a8a8"/><rect x="884" y="4" width="2" height="7" fill="#a2a2a2"/></svg><div class="t" style="left:175.5px;top:187.60px;font-size:9.8px;color:#333;font-weight:bold;">1</div><div class="t" style="left:236px;width:300px;text-align:center;top:187.60px;font-size:9.8px;color:#333;font-weight:bold;">1</div><div class="t" style="left:340px;width:300px;text-align:center;top:187.60px;font-size:9.8px;color:#333;font-weight:bold;">2</div><div class="t" style="left:444px;width:300px;text-align:center;top:187.60px;font-size:9.8px;color:#333;font-weight:bold;">3</div><div class="t" style="left:548px;width:300px;text-align:center;top:187.60px;font-size:9.8px;color:#333;font-weight:bold;">4</div><div class="t" style="left:652px;width:300px;text-align:center;top:187.60px;font-size:9.8px;color:#333;font-weight:bold;">5</div><div class="t" style="left:756px;width:300px;text-align:center;top:187.60px;font-size:9.8px;color:#333;font-weight:bold;">6</div><div class="t" style="left:860px;width:300px;text-align:center;top:187.60px;font-size:9.8px;color:#333;font-weight:bold;">7</div><div class="a" style="left:150px;top:214px;width:15px;height:101px;background:#c8c8c8"></div><div class="a" style="left:150px;top:315px;width:15px;height:104px;background:#fff"></div><div class="a" style="left:150px;top:419px;width:15px;height:24px;background:#c8c8c8"></div><div class="a" style="left:150px;top:443px;width:15px;height:104px;background:#fff"></div><div class="a" style="left:150px;top:547px;width:15px;height:29px;background:#c8c8c8"></div><svg class="a" style="left:150px;top:214px;" width="15" height="362" viewBox="0 0 15 362"><rect x="6.5" y="12" width="2" height="1" fill="#8f8f8f"/><rect x="6.5" y="25" width="2" height="1" fill="#8f8f8f"/><rect x="6.5" y="38" width="2" height="1" fill="#8f8f8f"/><rect x="4" y="51" width="7" height="1" fill="#8f8f8f"/><rect x="6.5" y="64" width="2" height="1" fill="#8f8f8f"/><rect x="6.5" y="113" width="2" height="1" fill="#8f8f8f"/><rect x="6.5" y="126" width="2" height="1" fill="#8f8f8f"/><rect x="6.5" y="139" width="2" height="1" fill="#8f8f8f"/><rect x="4" y="152" width="7" height="1" fill="#8f8f8f"/><rect x="6.5" y="165" width="2" height="1" fill="#8f8f8f"/><rect x="6.5" y="178" width="2" height="1" fill="#8f8f8f"/><rect x="6.5" y="191" width="2" height="1" fill="#8f8f8f"/><rect x="6.5" y="241" width="2" height="1" fill="#8f8f8f"/><rect x="6.5" y="254" width="2" height="1" fill="#8f8f8f"/><rect x="6.5" y="267" width="2" height="1" fill="#8f8f8f"/><rect x="4" y="280" width="7" height="1" fill="#8f8f8f"/><rect x="6.5" y="293" width="2" height="1" fill="#8f8f8f"/><rect x="6.5" y="306" width="2" height="1" fill="#8f8f8f"/><rect x="6.5" y="319" width="2" height="1" fill="#8f8f8f"/><rect x="6.5" y="347" width="2" height="1" fill="#8a8a8a"/><rect x="6.5" y="359" width="2" height="1" fill="#8a8a8a"/><rect x="4.5" y="86.0" width="7" height="1" fill="#777"/><rect x="4.5" y="88.5" width="7" height="1" fill="#777"/><rect x="4.5" y="91.0" width="7" height="1" fill="#777"/><rect x="4.5" y="214.0" width="7" height="1" fill="#777"/><rect x="4.5" y="216.5" width="7" height="1" fill="#777"/><rect x="4.5" y="219.0" width="7" height="1" fill="#777"/></svg><svg class="a" style="left:152px;top:411px;" width="11" height="8" viewBox="0 0 11 8"><text x="5.5" y="9.8" font-family="Liberation Sans" font-weight="bold" font-size="9.5" fill="#555" text-anchor="middle">1</text></svg><svg class="a" style="left:152px;top:539px;" width="11" height="8" viewBox="0 0 11 8"><text x="5.5" y="9.8" font-family="Liberation Sans" font-weight="bold" font-size="9.5" fill="#555" text-anchor="middle">1</text></svg><div class="a" style="left:176px;top:213px;width:887px;height:345px;background:#fff;border-left:1px solid #9a9a9a;border-top:1px solid #9a9a9a;border-right:1px solid #9a9a9a"></div><svg class="a" style="left:282px;top:214px;" width="676" height="343" viewBox="0 0 676 343"><rect x="13" y="0" width="1" height="77" fill="#efefef"/><rect x="26" y="0" width="1" height="77" fill="#efefef"/><rect x="39" y="0" width="1" height="77" fill="#efefef"/><rect x="52" y="0" width="1" height="77" fill="#e0e0e0"/><rect x="65" y="0" width="1" height="77" fill="#efefef"/><rect x="78" y="0" width="1" height="77" fill="#efefef"/><rect x="91" y="0" width="1" height="77" fill="#efefef"/><rect x="104" y="0" width="1" height="77" fill="#e0e0e0"/><rect x="117" y="0" width="1" height="77" fill="#efefef"/><rect x="130" y="0" width="1" height="77" fill="#efefef"/><rect x="143" y="0" width="1" height="77" fill="#efefef"/><rect x="156" y="0" width="1" height="77" fill="#e0e0e0"/><rect x="169" y="0" width="1" height="77" fill="#efefef"/><rect x="182" y="0" width="1" height="77" fill="#efefef"/><rect x="195" y="0" width="1" height="77" fill="#efefef"/><rect x="208" y="0" width="1" height="77" fill="#e0e0e0"/><rect x="221" y="0" width="1" height="77" fill="#efefef"/><rect x="234" y="0" width="1" height="77" fill="#efefef"/><rect x="247" y="0" width="1" height="77" fill="#efefef"/><rect x="260" y="0" width="1" height="77" fill="#e0e0e0"/><rect x="273" y="0" width="1" height="77" fill="#efefef"/><rect x="286" y="0" width="1" height="77" fill="#efefef"/><rect x="299" y="0" width="1" height="77" fill="#efefef"/><rect x="312" y="0" width="1" height="77" fill="#e0e0e0"/><rect x="325" y="0" width="1" height="77" fill="#efefef"/><rect x="338" y="0" width="1" height="77" fill="#efefef"/><rect x="351" y="0" width="1" height="77" fill="#efefef"/><rect x="364" y="0" width="1" height="77" fill="#e0e0e0"/><rect x="377" y="0" width="1" height="77" fill="#efefef"/><rect x="390" y="0" width="1" height="77" fill="#efefef"/><rect x="403" y="0" width="1" height="77" fill="#efefef"/><rect x="416" y="0" width="1" height="77" fill="#e0e0e0"/><rect x="429" y="0" width="1" height="77" fill="#efefef"/><rect x="442" y="0" width="1" height="77" fill="#efefef"/><rect x="455" y="0" width="1" height="77" fill="#efefef"/><rect x="468" y="0" width="1" height="77" fill="#e0e0e0"/><rect x="481" y="0" width="1" height="77" fill="#efefef"/><rect x="494" y="0" width="1" height="77" fill="#efefef"/><rect x="507" y="0" width="1" height="77" fill="#efefef"/><rect x="520" y="0" width="1" height="77" fill="#e0e0e0"/><rect x="533" y="0" width="1" height="77" fill="#efefef"/><rect x="546" y="0" width="1" height="77" fill="#efefef"/><rect x="559" y="0" width="1" height="77" fill="#efefef"/><rect x="572" y="0" width="1" height="77" fill="#e0e0e0"/><rect x="585" y="0" width="1" height="77" fill="#efefef"/><rect x="598" y="0" width="1" height="77" fill="#efefef"/><rect x="611" y="0" width="1" height="77" fill="#efefef"/><rect x="624" y="0" width="1" height="77" fill="#e0e0e0"/><rect x="637" y="0" width="1" height="77" fill="#efefef"/><rect x="650" y="0" width="1" height="77" fill="#efefef"/><rect x="663" y="0" width="1" height="77" fill="#efefef"/><rect x="1" y="13" width="675" height="1" fill="#efefef"/><rect x="1" y="26" width="675" height="1" fill="#efefef"/><rect x="1" y="39" width="675" height="1" fill="#efefef"/><rect x="1" y="52" width="675" height="1" fill="#e0e0e0"/><rect x="1" y="65" width="675" height="1" fill="#efefef"/><rect x="13" y="101" width="1" height="104" fill="#efefef"/><rect x="26" y="101" width="1" height="104" fill="#efefef"/><rect x="39" y="101" width="1" height="104" fill="#efefef"/><rect x="52" y="101" width="1" height="104" fill="#e0e0e0"/><rect x="65" y="101" width="1" height="104" fill="#efefef"/><rect x="78" y="101" width="1" height="104" fill="#efefef"/><rect x="91" y="101" width="1" height="104" fill="#efefef"/><rect x="104" y="101" width="1" height="104" fill="#e0e0e0"/><rect x="117" y="101" width="1" height="104" fill="#efefef"/><rect x="130" y="101" width="1" height="104" fill="#efefef"/><rect x="143" y="101" width="1" height="104" fill="#efefef"/><rect x="156" y="101" width="1" height="104" fill="#e0e0e0"/><rect x="169" y="101" width="1" height="104" fill="#efefef"/><rect x="182" y="101" width="1" height="104" fill="#efefef"/><rect x="195" y="101" width="1" height="104" fill="#efefef"/><rect x="208" y="101" width="1" height="104" fill="#e0e0e0"/><rect x="221" y="101" width="1" height="104" fill="#efefef"/><rect x="234" y="101" width="1" height="104" fill="#efefef"/><rect x="247" y="101" width="1" height="104" fill="#efefef"/><rect x="260" y="101" width="1" height="104" fill="#e0e0e0"/><rect x="273" y="101" width="1" height="104" fill="#efefef"/><rect x="286" y="101" width="1" height="104" fill="#efefef"/><rect x="299" y="101" width="1" height="104" fill="#efefef"/><rect x="312" y="101" width="1" height="104" fill="#e0e0e0"/><rect x="325" y="101" width="1" height="104" fill="#efefef"/><rect x="338" y="101" width="1" height="104" fill="#efefef"/><rect x="351" y="101" width="1" height="104" fill="#efefef"/><rect x="364" y="101" width="1" height="104" fill="#e0e0e0"/><rect x="377" y="101" width="1" height="104" fill="#efefef"/><rect x="390" y="101" width="1" height="104" fill="#efefef"/><rect x="403" y="101" width="1" height="104" fill="#efefef"/><rect x="416" y="101" width="1" height="104" fill="#e0e0e0"/><rect x="429" y="101" width="1" height="104" fill="#efefef"/><rect x="442" y="101" width="1" height="104" fill="#efefef"/><rect x="455" y="101" width="1" height="104" fill="#efefef"/><rect x="468" y="101" width="1" height="104" fill="#e0e0e0"/><rect x="481" y="101" width="1" height="104" fill="#efefef"/><rect x="494" y="101" width="1" height="104" fill="#efefef"/><rect x="507" y="101" width="1" height="104" fill="#efefef"/><rect x="520" y="101" width="1" height="104" fill="#e0e0e0"/><rect x="533" y="101" width="1" height="104" fill="#efefef"/><rect x="546" y="101" width="1" height="104" fill="#efefef"/><rect x="559" y="101" width="1" height="104" fill="#efefef"/><rect x="572" y="101" width="1" height="104" fill="#e0e0e0"/><rect x="585" y="101" width="1" height="104" fill="#efefef"/><rect x="598" y="101" width="1" height="104" fill="#efefef"/><rect x="611" y="101" width="1" height="104" fill="#efefef"/><rect x="624" y="101" width="1" height="104" fill="#e0e0e0"/><rect x="637" y="101" width="1" height="104" fill="#efefef"/><rect x="650" y="101" width="1" height="104" fill="#efefef"/><rect x="663" y="101" width="1" height="104" fill="#efefef"/><rect x="1" y="114" width="675" height="1" fill="#efefef"/><rect x="1" y="127" width="675" height="1" fill="#efefef"/><rect x="1" y="140" width="675" height="1" fill="#efefef"/><rect x="1" y="153" width="675" height="1" fill="#e0e0e0"/><rect x="1" y="166" width="675" height="1" fill="#efefef"/><rect x="1" y="179" width="675" height="1" fill="#efefef"/><rect x="1" y="192" width="675" height="1" fill="#efefef"/><rect x="13" y="229" width="1" height="114" fill="#efefef"/><rect x="26" y="229" width="1" height="114" fill="#efefef"/><rect x="39" y="229" width="1" height="114" fill="#efefef"/><rect x="52" y="229" width="1" height="114" fill="#e0e0e0"/><rect x="65" y="229" width="1" height="114" fill="#efefef"/><rect x="78" y="229" width="1" height="114" fill="#efefef"/><rect x="91" y="229" width="1" height="114" fill="#efefef"/><rect x="104" y="229" width="1" height="114" fill="#e0e0e0"/><rect x="117" y="229" width="1" height="114" fill="#efefef"/><rect x="130" y="229" width="1" height="114" fill="#efefef"/><rect x="143" y="229" width="1" height="114" fill="#efefef"/><rect x="156" y="229" width="1" height="114" fill="#e0e0e0"/><rect x="169" y="229" width="1" height="114" fill="#efefef"/><rect x="182" y="229" width="1" height="114" fill="#efefef"/><rect x="195" y="229" width="1" height="114" fill="#efefef"/><rect x="208" y="229" width="1" height="114" fill="#e0e0e0"/><rect x="221" y="229" width="1" height="114" fill="#efefef"/><rect x="234" y="229" width="1" height="114" fill="#efefef"/><rect x="247" y="229" width="1" height="114" fill="#efefef"/><rect x="260" y="229" width="1" height="114" fill="#e0e0e0"/><rect x="273" y="229" width="1" height="114" fill="#efefef"/><rect x="286" y="229" width="1" height="114" fill="#efefef"/><rect x="299" y="229" width="1" height="114" fill="#efefef"/><rect x="312" y="229" width="1" height="114" fill="#e0e0e0"/><rect x="325" y="229" width="1" height="114" fill="#efefef"/><rect x="338" y="229" width="1" height="114" fill="#efefef"/><rect x="351" y="229" width="1" height="114" fill="#efefef"/><rect x="364" y="229" width="1" height="114" fill="#e0e0e0"/><rect x="377" y="229" width="1" height="114" fill="#efefef"/><rect x="390" y="229" width="1" height="114" fill="#efefef"/><rect x="403" y="229" width="1" height="114" fill="#efefef"/><rect x="416" y="229" width="1" height="114" fill="#e0e0e0"/><rect x="429" y="229" width="1" height="114" fill="#efefef"/><rect x="442" y="229" width="1" height="114" fill="#efefef"/><rect x="455" y="229" width="1" height="114" fill="#efefef"/><rect x="468" y="229" width="1" height="114" fill="#e0e0e0"/><rect x="481" y="229" width="1" height="114" fill="#efefef"/><rect x="494" y="229" width="1" height="114" fill="#efefef"/><rect x="507" y="229" width="1" height="114" fill="#efefef"/><rect x="520" y="229" width="1" height="114" fill="#e0e0e0"/><rect x="533" y="229" width="1" height="114" fill="#efefef"/><rect x="546" y="229" width="1" height="114" fill="#efefef"/><rect x="559" y="229" width="1" height="114" fill="#efefef"/><rect x="572" y="229" width="1" height="114" fill="#e0e0e0"/><rect x="585" y="229" width="1" height="114" fill="#efefef"/><rect x="598" y="229" width="1" height="114" fill="#efefef"/><rect x="611" y="229" width="1" height="114" fill="#efefef"/><rect x="624" y="229" width="1" height="114" fill="#e0e0e0"/><rect x="637" y="229" width="1" height="114" fill="#efefef"/><rect x="650" y="229" width="1" height="114" fill="#efefef"/><rect x="663" y="229" width="1" height="114" fill="#efefef"/><rect x="1" y="242" width="675" height="1" fill="#efefef"/><rect x="1" y="255" width="675" height="1" fill="#efefef"/><rect x="1" y="268" width="675" height="1" fill="#efefef"/><rect x="1" y="281" width="675" height="1" fill="#e0e0e0"/><rect x="1" y="294" width="675" height="1" fill="#efefef"/><rect x="1" y="307" width="675" height="1" fill="#efefef"/><rect x="1" y="320" width="675" height="1" fill="#efefef"/><rect x="1" y="333" width="675" height="1" fill="#e0e0e0"/></svg><div class="a" style="left:283px;top:292px;width:675px;height:23px;background:#f1f1f1;border-bottom:1px solid #d9d9d9"></div><svg class="a" style="left:288px;top:299px;" width="8" height="7" viewBox="0 0 8 7"><path d="M0 0 h7 l-3.5 6z" fill="#6a6a6a"/></svg><div class="t" style="left:322px;top:294.68px;font-size:11.9px;color:#7a7a7a;">ReportHeader [one band per report]</div><div class="a" style="left:283px;top:419px;width:675px;height:24px;background:#f1f1f1;border-bottom:1px solid #d9d9d9;border-top:1px solid #d9d9d9"></div><svg class="a" style="left:288px;top:426px;" width="8" height="7" viewBox="0 0 8 7"><path d="M0 0 h7 l-3.5 6z" fill="#6a6a6a"/></svg><div class="t" style="left:322px;top:421.68px;font-size:11.9px;color:#7a7a7a;">Detail</div><svg class="a" style="left:304px;top:294px;" width="14" height="17" viewBox="0 0 14 17"><path d="M2.5 2.5 H1 V16 H13 V2.5 H11.5" fill="none" stroke="#5e5e5e" stroke-width="1.1"/><path d="M4.2 3.2 a2.8 2.4 0 0 1 5.6 0z" fill="#5e5e5e"/><rect x="2.2" y="5.5" width="9.6" height="3.6" fill="#d0202a"/><rect x="2.5" y="13.2" width="9" height="0.9" fill="#9a9a9a"/></svg><svg class="a" style="left:304px;top:422px;" width="14" height="17" viewBox="0 0 14 17"><rect x="1" y="1" width="12" height="15" fill="#fff" stroke="#6a6a6a" stroke-width="1.2"/><rect x="3" y="3" width="8" height="11" fill="none" stroke="#aaa" stroke-width="0.8"/><rect x="5" y="6" width="4" height="1" fill="#3a7fd0"/><rect x="5" y="8" width="4" height="1" fill="#3a7fd0"/><rect x="5" y="10" width="4" height="1" fill="#3a7fd0"/></svg><svg class="a" style="left:282px;top:214px;" width="1" height="343" viewBox="0 0 1 343"><path d="M0.5 0 V343" stroke="#9a9a9a" stroke-width="1" stroke-dasharray="4 1.5"/></svg><svg class="a" style="left:958px;top:214px;" width="1" height="343" viewBox="0 0 1 343"><path d="M0.5 0 V343" stroke="#9a9a9a" stroke-width="1" stroke-dasharray="4 1.5"/></svg><svg class="a" style="left:177px;top:291px;" width="885" height="1" viewBox="0 0 885 1"><path d="M0 0.5 H885" stroke="#8a8a8a" stroke-width="1" stroke-dasharray="3 1.5"/></svg><svg class="a" style="left:177px;top:547px;" width="885" height="1" viewBox="0 0 885 1"><path d="M0 0.5 H885" stroke="#8a8a8a" stroke-width="1" stroke-dasharray="3 1.5"/></svg><div class="a" style="left:279px;top:405px;width:681px;height:6px;border:1px solid #88a6d3;background:#fff"></div><svg class="a" style="left:282px;top:406px;" width="676" height="3" viewBox="0 0 676 3"><path d="M0 1.5 H676" stroke="#111" stroke-width="2" stroke-dasharray="3.8 2.8"/></svg><div class="a" style="left:966px;top:406px;width:26px;height:26px;background:#f0f0f0;border:1px solid #acacac"></div><svg class="a" style="left:966px;top:406px;" width="26" height="26" viewBox="0 0 26 26"><path d="M17.2 6.6 C16 5.3 13.3 5.3 12.6 8.2 L10.3 17.6 C9.7 19.8 8.3 20.3 7.3 19.6" fill="none" stroke="#5e5e5e" stroke-width="2.3" stroke-linecap="round"/><path d="M9.8 10.6 H16.6" stroke="#5e5e5e" stroke-width="2"/></svg><div class="a" style="left:1095px;top:212px;width:16px;height:18px;background:#fff;border:1px solid #a6a6a6"></div><svg class="a" style="left:1099px;top:218px;" width="8" height="5" viewBox="0 0 8 5"><path d="M0 4.5 L3.75 0.5 L7.5 4.5z" fill="#555"/></svg><div class="a" style="left:1095px;top:229px;width:16px;height:237px;background:#fff;border:1px solid #a6a6a6"></div><div class="a" style="left:1095px;top:539px;width:16px;height:18px;background:#fff;border:1px solid #a6a6a6"></div><svg class="a" style="left:1099px;top:547px;" width="8" height="5" viewBox="0 0 8 5"><path d="M0 0.5 L3.75 4.5 L7.5 0.5z" fill="#555"/></svg><div class="a" style="left:175px;top:558px;width:17px;height:17px;background:#fff;border:1px solid #a6a6a6"></div><svg class="a" style="left:180px;top:562px;" width="5" height="8" viewBox="0 0 5 8"><path d="M4.5 0 L0.5 3.75 L4.5 7.5z" fill="#555"/></svg><div class="a" style="left:191px;top:558px;width:881px;height:17px;background:#fff;border:1px solid #a6a6a6"></div><div class="a" style="left:1076px;top:558px;width:17px;height:17px;background:#fff;border:1px solid #a6a6a6"></div><svg class="a" style="left:1082px;top:562px;" width="5" height="8" viewBox="0 0 5 8"><path d="M0.5 0 L4.5 3.75 L0.5 7.5z" fill="#555"/></svg><div class="a" style="left:1112px;top:141px;width:182px;height:590px;background:#f0f0f0"></div><div class="a" style="left:1112px;top:141px;width:1px;height:590px;background:#d6d6d6"></div><div class="a" style="left:1113px;top:141px;width:181px;height:25px;background:#dadada"></div><div class="t" style="left:1119px;top:145.27px;font-size:12.2px;color:#222;font-weight:bold;">Field List</div><svg class="a" style="left:1231px;top:148px;" width="60" height="12" viewBox="0 0 60 12"><rect x="2" y="2" width="8" height="8" fill="none" stroke="#6a6a6a" stroke-width="1.1"/><path d="M25 1.5 h6 M26.5 1.5 v5 M29.5 1.5 v5 M24 6.5 h8 M28 6.5 v5" fill="none" stroke="#6a6a6a" stroke-width="1.1"/><path d="M45.5 1.5 L54 10 M54 1.5 L45.5 10" stroke="#6a6a6a" stroke-width="1.2"/></svg><div class="a" style="left:1113px;top:166px;width:180px;height:22px;background:#fff;border:1px solid #b9b9b9"></div><div class="t" style="left:1117.5px;top:169.57px;font-size:12.2px;color:#8c8c8c;">Enter text to search...</div><svg class="a" style="left:1279px;top:171px;" width="12" height="12" viewBox="0 0 12 12"><circle cx="7" cy="4.5" r="3.4" fill="none" stroke="#707070" stroke-width="1.1"/><path d="M4.6 7 L1 10.6" stroke="#707070" stroke-width="1.3"/></svg><div class="a" style="left:1113px;top:188px;width:180px;height:187px;background:#fff"></div><svg class="a" style="left:1119px;top:196px;" width="10" height="7" viewBox="0 0 10 7"><path d="M1 1 L5 5 L9 1" fill="none" stroke="#444" stroke-width="1.4"/></svg><svg class="a" style="left:1135px;top:192px;" width="16" height="14" viewBox="0 0 16 14"><rect x="0" y="0" width="15.5" height="3.3" fill="#f0962d"/><rect x="0" y="5" width="4.2" height="3" fill="#a6a6a6"/><rect x="0" y="9.8" width="4.2" height="3" fill="#a6a6a6"/><rect x="5.6" y="5" width="4.2" height="3" fill="#a6a6a6"/><rect x="5.6" y="9.8" width="4.2" height="3" fill="#a6a6a6"/><rect x="11.2" y="5" width="4.2" height="3" fill="#a6a6a6"/><rect x="11.2" y="9.8" width="4.2" height="3" fill="#a6a6a6"/></svg><div class="t" style="left:1156.3px;top:190.62px;font-size:11.5px;color:#222;">Report Data</div><div class="a" style="left:1153px;top:210px;width:140px;height:21px;background:#d8d8d8"></div><svg class="a" style="left:1140px;top:216px;" width="7" height="10" viewBox="0 0 7 10"><path d="M1 1 L5 5 L1 9" fill="none" stroke="#444" stroke-width="1.4"/></svg><svg class="a" style="left:1155px;top:213px;" width="16" height="14" viewBox="0 0 16 14"><rect x="0" y="0" width="15.5" height="3.3" fill="#f0962d"/><rect x="0" y="5" width="4.2" height="3" fill="#a6a6a6"/><rect x="0" y="9.8" width="4.2" height="3" fill="#a6a6a6"/><rect x="5.6" y="5" width="4.2" height="3" fill="#a6a6a6"/><rect x="5.6" y="9.8" width="4.2" height="3" fill="#a6a6a6"/><rect x="11.2" y="5" width="4.2" height="3" fill="#a6a6a6"/><rect x="11.2" y="9.8" width="4.2" height="3" fill="#a6a6a6"/></svg><div class="t" style="left:1176px;top:211.52px;font-size:11.5px;color:#222;">Query Results</div><div class="a" style="left:1113px;top:375px;width:180px;height:30px;background:#dcdcdc"></div><div class="a" style="left:1199px;top:376px;width:91px;height:25px;background:#ececec;border:1px solid #d0d0d0"></div><div class="a" style="left:1116px;top:375px;width:84px;height:27px;background:#efefef;border:1px solid #d0d0d0;border-top:none"></div><svg class="a" style="left:1125px;top:378px;" width="19" height="20" viewBox="0 0 19 20"><path d="M1.5 3 a4.5 1.8 0 0 1 9 0 v11 a4.5 1.8 0 0 1 -9 0z" fill="#f2b25a" stroke="#c98a30" stroke-width="0.8"/><rect x="6.5" y="8.5" width="11" height="4.5" fill="#fff" stroke="#3a7fd0" stroke-width="1.1"/><rect x="6.5" y="14" width="11" height="4.5" fill="#fff" stroke="#3a7fd0" stroke-width="1.1"/></svg><div class="t" style="left:1146.7px;top:380.62px;font-size:11.2px;color:#333;">Field List</div><svg class="a" style="left:1207px;top:378px;" width="20" height="20" viewBox="0 0 20 20"><rect x="1" y="3" width="11" height="14" fill="#e6e6e6" stroke="#6a6a6a" stroke-width="1"/><rect x="4" y="1" width="5" height="3" fill="#3a7fd0"/><circle cx="14" cy="12" r="4.3" fill="#fff" stroke="#e0853a" stroke-width="1.4"/><rect x="7" y="11" width="8" height="7.5" fill="#5cb82c"/></svg><div class="t" style="left:1229px;top:380.52px;font-size:11.5px;color:#333;">Report E...</div><div class="a" style="left:1113px;top:405px;width:181px;height:25px;background:#dadada"></div><div class="t" style="left:1119px;top:409.30px;font-size:12.7px;color:#222;font-weight:bold;">Properties</div><svg class="a" style="left:1231px;top:412px;" width="60" height="12" viewBox="0 0 60 12"><rect x="2" y="2" width="8" height="8" fill="none" stroke="#6a6a6a" stroke-width="1.1"/><path d="M25 1.5 h6 M26.5 1.5 v5 M29.5 1.5 v5 M24 6.5 h8 M28 6.5 v5" fill="none" stroke="#6a6a6a" stroke-width="1.1"/><path d="M45.5 1.5 L54 10 M54 1.5 L45.5 10" stroke="#6a6a6a" stroke-width="1.2"/></svg><div class="a" style="left:1125px;top:440px;width:157px;height:24px;background:#fff;border:1px solid #b4b4b4"></div><div class="t" style="left:1130px;top:445.20px;font-size:12.4px;color:#222;font-weight:bold;">pageBreak1   Page ...</div><svg class="a" style="left:1269px;top:450px;" width="8" height="5" viewBox="0 0 8 5"><path d="M0 0.5 h7 l-3.5 3.5z" fill="#666"/></svg><svg class="a" style="left:1121px;top:480px;" width="24" height="23" viewBox="0 0 24 23"><path d="M1 21.5 C3 17 5 15.5 8 15.5 L10 17.5 C9 20 6 21.5 1 21.5z" fill="#f0962d"/><path d="M8.7 14.7 L12.5 11 L14.8 13.3 L11 17z" fill="#6e6e78"/><path d="M13.3 10.2 L19.5 4 L21.8 6.3 L15.6 12.5z" fill="#d0283c"/></svg><svg class="a" style="left:1161px;top:480px;" width="23" height="23" viewBox="0 0 23 23"><path d="M9 10 L19.5 20.5" stroke="#6e6e78" stroke-width="4.4" stroke-linecap="round"/><circle cx="7.3" cy="8" r="6.3" fill="#6e6e78"/><path d="M1 1.5 L7.2 7.8" stroke="#f0f0f0" stroke-width="4.2" stroke-linecap="round"/></svg><svg class="a" style="left:1199px;top:479px;" width="24" height="23" viewBox="0 0 24 23"><path d="M11.7 1 L14.6 8.5 L22.5 8.7 L16.3 13.6 L18.6 21.3 L11.7 16.8 L4.8 21.3 L7.1 13.6 L0.9 8.7 L8.8 8.5z" fill="#4a86c8"/></svg><svg class="a" style="left:1238px;top:488px;" width="24" height="6" viewBox="0 0 24 6"><circle cx="2.8" cy="3" r="2" fill="#6e6e78"/><circle cx="11.7" cy="3" r="2" fill="#6e6e78"/><circle cx="20.6" cy="3" r="2" fill="#6e6e78"/></svg><svg class="a" style="left:1117px;top:500px;" width="176" height="10" viewBox="0 0 176 10"><path d="M0 8.5 H9 L15.5 2.5 L22 8.5 H176" fill="none" stroke="#c8c8c8" stroke-width="1"/></svg><svg class="a" style="left:1125px;top:527px;" width="7" height="9" viewBox="0 0 7 9"><path d="M1 1 L5 4.5 L1 8" fill="none" stroke="#666" stroke-width="1.3"/></svg><div class="t" style="left:1138px;top:523.69px;font-size:11px;color:#777;">..</div><div class="a" style="left:1150px;top:520px;width:87px;height:24px;background:#fff;border:1px solid #a8a8a8"></div><div class="t" style="left:1155px;top:523.84px;font-size:12px;color:#333;">0, 88</div><div class="a" style="left:1251px;top:528px;width:7px;height:7px;background:#8aa0c8;border:1px solid #6e7fa8"></div><div class="a" style="left:1112px;top:668px;width:181px;height:1px;background:#cfcfcf"></div><div class="a" style="left:139px;top:576px;width:973px;height:155px;background:#f0f0f0"></div><div class="a" style="left:139px;top:576px;width:973px;height:25px;background:#dadada"></div><div class="t" style="left:146px;top:580.93px;font-size:12.6px;color:#222;font-weight:bold;">Group and Sort</div><svg class="a" style="left:1070px;top:583px;" width="40" height="12" viewBox="0 0 40 12"><path d="M3 1.5 h6 M4.5 1.5 v5 M7.5 1.5 v5 M2 6.5 h8 M6 6.5 v5" fill="none" stroke="#6a6a6a" stroke-width="1.1"/><path d="M24.5 1.5 L33 10 M33 1.5 L24.5 10" stroke="#6a6a6a" stroke-width="1.2"/></svg><div class="a" style="left:139px;top:601px;width:973px;height:27px;background:#f0f0f0;border-bottom:1px solid #d2d2d2"></div><svg class="a" style="left:148px;top:607px;" width="15" height="15" viewBox="0 0 15 15"><rect x="1" y="1" width="8.5" height="8.5" fill="#3a7fd0"/><rect x="4.5" y="4" width="9.5" height="10" fill="#3aa35a"/><path d="M0.5 11 v3.5 h3.5 M11 0.5 h3.5 v3" fill="none" stroke="#333" stroke-width="1"/></svg><div class="t" style="left:168.8px;top:607.33px;font-size:12.6px;color:#333;">Add a Group</div><svg class="a" style="left:244px;top:613px;" width="6" height="4" viewBox="0 0 6 4"><path d="M0 0.5 h5.5 l-2.75 3z" fill="#333"/></svg><svg class="a" style="left:266px;top:607px;" width="14" height="15" viewBox="0 0 14 15"><path d="M0.5 0.5 h7 l-3.5 7.5z" fill="#3a7fd0"/><path d="M8.5 6.5 l4 7.7 h-8z" fill="#3aa35a"/></svg><div class="t" style="left:286px;top:607.33px;font-size:12.6px;color:#333;">Add a Sort</div><svg class="a" style="left:348px;top:613px;" width="6" height="4" viewBox="0 0 6 4"><path d="M0 0.5 h5.5 l-2.75 3z" fill="#333"/></svg><svg class="a" style="left:369px;top:609px;" width="12" height="12" viewBox="0 0 12 12"><path d="M1 1 L10.5 10.5 M10.5 1 L1 10.5" stroke="#b0b0b0" stroke-width="1.5"/></svg><div class="t" style="left:388.2px;top:607.47px;font-size:12.2px;color:#a3a3a3;">Delete</div><div class="a" style="left:431px;top:604px;width:1px;height:21px;background:#cfcfcf"></div><svg class="a" style="left:440px;top:607px;" width="17" height="17" viewBox="0 0 17 17"><circle cx="8.3" cy="8.3" r="7.6" fill="#bdbdbd"/><path d="M8.3 3.5 L12 7.5 H9.6 V12.5 H7 V7.5 H4.6z" fill="#fff"/></svg><div class="t" style="left:462px;top:607.28px;font-size:12.75px;color:#a3a3a3;">Move Up</div><svg class="a" style="left:525px;top:607px;" width="17" height="17" viewBox="0 0 17 17"><circle cx="8.3" cy="8.3" r="7.6" fill="#bdbdbd"/><path d="M8.3 13 L12 9 H9.6 V4 H7 V9 H4.6z" fill="#fff"/></svg><div class="t" style="left:546.6px;top:607.23px;font-size:12.9px;color:#a3a3a3;">Move Down</div><div class="a" style="left:139px;top:628px;width:973px;height:25px;background:#efefef;border-bottom:1px solid #a8a8a8"></div><div class="a" style="left:384px;top:628px;width:1px;height:24px;background:#c6c6c6"></div><div class="a" style="left:484px;top:628px;width:1px;height:24px;background:#c6c6c6"></div><div class="a" style="left:584px;top:628px;width:1px;height:24px;background:#c6c6c6"></div><div class="a" style="left:684px;top:628px;width:1px;height:24px;background:#c6c6c6"></div><div class="t" style="left:143.2px;top:632.19px;font-size:11px;color:#8a8a8a;">Field Name</div><div class="t" style="left:389px;top:632.19px;font-size:11px;color:#8a8a8a;">Sort Order</div><div class="t" style="left:489px;top:632.19px;font-size:11px;color:#8a8a8a;">Show Header</div><div class="t" style="left:589px;top:632.19px;font-size:11px;color:#8a8a8a;">Show Footer</div><div class="a" style="left:139px;top:653px;width:973px;height:48px;background:#fff"></div><div class="a" style="left:139px;top:701px;width:973px;height:30px;background:#dcdcdc"></div><div class="a" style="left:260px;top:702px;width:160px;height:26px;background:#ececec;border:1px solid #d0d0d0"></div><div class="a" style="left:141px;top:701px;width:120px;height:28px;background:#efefef;border:1px solid #d0d0d0;border-top:none"></div><svg class="a" style="left:151px;top:706px;" width="18" height="18" viewBox="0 0 18 18"><rect x="1" y="1" width="11" height="8" fill="#bcd3ee" stroke="#3a7fd0" stroke-width="1"/><path d="M4 6 H17 L10.5 16.5z" fill="#6cc040" stroke="#3a8a2a" stroke-width="0.8"/></svg><div class="t" style="left:172.3px;top:707.48px;font-size:11.6px;color:#333;">Group and Sort</div><svg class="a" style="left:268px;top:705px;" width="20" height="20" viewBox="0 0 20 20"><rect x="1.5" y="1.5" width="11" height="13" fill="#fff" stroke="#3a7fd0" stroke-width="1.1"/><path d="M5.5 5 Q4 8 5.5 11 M8.5 5 Q10 8 8.5 11" fill="none" stroke="#3a7fd0" stroke-width="1"/><circle cx="12.5" cy="15" r="4.7" fill="#d8322e"/><path d="M10.5 13 L14.5 17 M14.5 13 L10.5 17" stroke="#fff" stroke-width="1.3"/></svg><div class="t" style="left:289.5px;top:707.48px;font-size:11.6px;color:#333;">Report Design Analyzer</div><div class="a" style="left:1px;top:731px;width:1293px;height:26px;background:#dcdcdc"></div><div class="a" style="left:1px;top:731px;width:1293px;height:1px;background:#cfcfcf"></div><div class="t" style="left:6.5px;top:736.65px;font-size:11.7px;color:#333;">pageBreak1 { Location:0,88 Size:650,2 }</div><div class="a" style="left:227px;top:732px;width:1px;height:25px;background:#c2c2c2"></div><div class="a" style="left:270px;top:732px;width:1px;height:25px;background:#c2c2c2"></div><div class="t" style="left:276.5px;top:736.65px;font-size:11.7px;color:#333;word-spacing:0px">Record Count:   0</div><div class="a" style="left:375px;top:732px;width:1px;height:25px;background:#c2c2c2"></div><svg class="a" style="left:381px;top:734px;" width="19" height="18" viewBox="0 0 19 18"><path d="M9.3 1.2 L17.8 16.6 H0.8z" fill="#f0b23c" stroke="#e8a838" stroke-width="1" stroke-linejoin="round"/><rect x="8.4" y="6" width="1.9" height="5.5" fill="#222"/><rect x="8.4" y="12.8" width="1.9" height="1.9" fill="#222"/></svg><div class="t" style="left:404px;top:736.65px;font-size:11.7px;color:#333;">Partial query results in use</div><div class="t" style="right:191px;text-align:right;top:736.65px;font-size:11.7px;color:#333;">100%</div><div class="a" style="left:1122px;top:743px;width:10px;height:2px;background:#555"></div><div class="a" style="left:1139px;top:743px;width:52px;height:1px;background:#3a66a8"></div><div class="a" style="left:1197px;top:743px;width:54px;height:1px;background:#9a9a9a"></div><div class="a" style="left:1191px;top:737px;width:6px;height:14px;background:#6a6a6a"></div><div class="a" style="left:1257px;top:743px;width:10px;height:2px;background:#555"></div><div class="a" style="left:1261px;top:739px;width:2px;height:10px;background:#555"></div><svg class="a" style="left:1276px;top:741px;" width="14" height="12" viewBox="0 0 14 12"><rect x="9.5" y="0.5" width="2" height="2" fill="#b0b0b0"/><rect x="5.5" y="4.5" width="2" height="2" fill="#b0b0b0"/><rect x="9.5" y="4.5" width="2" height="2" fill="#b0b0b0"/><rect x="1.5" y="8.5" width="2" height="2" fill="#b0b0b0"/><rect x="5.5" y="8.5" width="2" height="2" fill="#b0b0b0"/><rect x="9.5" y="8.5" width="2" height="2" fill="#b0b0b0"/></svg><div class="a" style="left:0px;top:757px;width:1295px;height:1px;background:#2e4f7c"></div><div class="a" style="left:0px;top:0px;width:1px;height:758px;background:#2e4f7c"></div><div class="a" style="left:1294px;top:0px;width:1px;height:758px;background:#2e4f7c"></div></body></html>
